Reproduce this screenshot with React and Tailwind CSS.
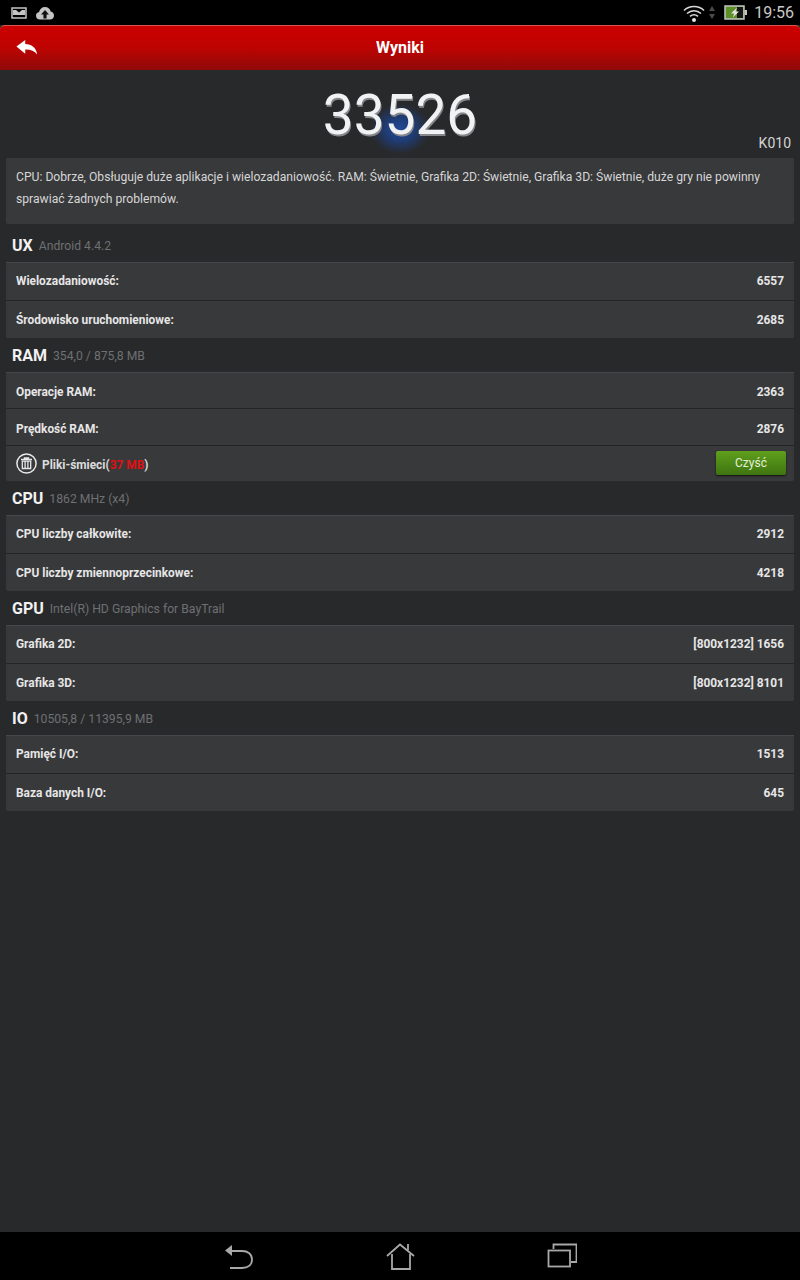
import React from 'react';

const sections = [
  {
    title: 'UX',
    sub: 'Android 4.4.2',
    head: 'h-[38px] pt-[6px]',
    rows: [
      { label: 'Wielozadaniowość:', value: '6557', tweak: 'h-[38px]' },
      { label: 'Środowisko uruchomieniowe:', value: '2685', tweak: 'h-[38px] pt-[2px]' },
    ],
  },
  {
    title: 'RAM',
    sub: '354,0 / 875,8 MB',
    rows: [
      { label: 'Operacje RAM:', value: '2363', tweak: 'h-[36px] pt-[4px]' },
      { label: 'Prędkość RAM:', value: '2876', tweak: 'h-[37px] pt-[5px]' },
    ],
    junk: true,
  },
  {
    title: 'CPU',
    sub: '1862 MHz (x4)',
    rows: [
      { label: 'CPU liczby całkowite:', value: '2912', tweak: 'h-[38px]' },
      { label: 'CPU liczby zmiennoprzecinkowe:', value: '4218', tweak: 'h-[38px] pt-[2px]' },
    ],
  },
  {
    title: 'GPU',
    sub: 'Intel(R) HD Graphics for BayTrail',
    rows: [
      { label: 'Grafika 2D:', value: '[800x1232] 1656', tweak: 'h-[38px]' },
      { label: 'Grafika 3D:', value: '[800x1232] 8101', tweak: 'h-[38px] pt-[2px]' },
    ],
  },
  {
    title: 'IO',
    sub: '10505,8 / 11395,9 MB',
    rows: [
      { label: 'Pamięć I/O:', value: '1513', tweak: 'h-[38px]' },
      { label: 'Baza danych I/O:', value: '645', tweak: 'h-[38px] pt-[2px]' },
    ],
  },
];

function StatusBar() {
  return (
    <div className="h-[25px] bg-black flex items-center justify-between pl-[11px] pr-[6px] shrink-0">
      <div className="flex items-center gap-[9px]">
        <svg width="16" height="12" viewBox="0 0 16 12">
          <rect x="1" y="1" width="14" height="10" fill="none" stroke="#c4c4c4" strokeWidth="1.5" />
          <path d="M2 8 L2 3 L5 3 L8 5.5 L11 3 L14 3 L14 8 Z" fill="#c4c4c4" />
        </svg>
        <svg width="18" height="14" viewBox="0 0 18 14">
          <path d="M4 13.5 C1.5 13.5 0 11.8 0 9.7 C0 7.8 1.3 6.4 3.1 6.1 C3.6 3 6 1 9 1 C11.8 1 14 2.8 14.7 5.4 C16.6 5.6 18 7.3 18 9.4 C18 11.8 16.2 13.5 14 13.5 Z" fill="#c4c4c4" />
          <path d="M9 4 L13 8.4 L10.6 8.4 L10.6 12.5 L7.4 12.5 L7.4 8.4 L5 8.4 Z" fill="#111" />
        </svg>
      </div>
      <div className="flex items-center">
        <svg width="22" height="18" viewBox="0 0 22 18">
          <path d="M1 6.5 C6.5 1.2 15.5 1.2 21 6.5" fill="none" stroke="#d8d8d8" strokeWidth="1.6" />
          <path d="M4 9.5 C8 5.8 14 5.8 18 9.5" fill="none" stroke="#d8d8d8" strokeWidth="1.6" />
          <path d="M7 12.4 C9.4 10.4 12.6 10.4 15 12.4" fill="none" stroke="#d8d8d8" strokeWidth="1.6" />
          <circle cx="11" cy="16" r="2" fill="#e4e4e4" />
        </svg>
        <svg width="6" height="13" viewBox="0 0 6 13" className="ml-[4px]">
          <path d="M3 0 L6 5 L0 5 Z" fill="#4a4a4a" />
          <path d="M3 13 L6 8 L0 8 Z" fill="#4a4a4a" />
        </svg>
        <svg width="23" height="15" viewBox="0 0 23 15" className="ml-[9px]">
          <rect x="1" y="1" width="19" height="13" fill="#5d8f28" stroke="#c4c4c4" strokeWidth="1.5" />
          <rect x="13" y="2" width="6" height="11" fill="#161616" />
          <rect x="20.5" y="5" width="2.5" height="5" fill="#c4c4c4" />
          <path d="M13 2.5 L7 8.4 L10.4 8.4 L8.6 12.5 L15 6.6 L11.5 6.6 Z" fill="#e8e8e8" />
        </svg>
        <span className="ml-[7px] text-[16px] leading-none text-[#c9c9c9]">19:56</span>
      </div>
    </div>
  );
}

function TitleBar() {
  return (
    <div className="h-[45px] shrink-0 relative flex items-center justify-center rounded-t-[5px] border-t border-[#d9544f] bg-gradient-to-b from-[#cc0000] via-[#bd0301] to-[#8f0a08]">
      <svg width="22" height="15" viewBox="0 0 24 17" className="absolute left-[16px] top-[14px]">
        <path d="M0 7.5 L10 0 L10 4.6 C17 4.6 22.5 8.6 23.5 16.5 C20.5 12.6 16 10.6 10 10.8 L10 15.5 Z" fill="#ffffff" />
      </svg>
      <span className="text-[16px] font-bold text-white">Wyniki</span>
    </div>
  );
}

function Score() {
  return (
    <div className="h-[88px] shrink-0 relative flex justify-center">
      <div className="absolute left-[370px] top-[34px] w-[60px] h-[50px] bg-[radial-gradient(closest-side,#234a96_0%,#1f3d78_45%,transparent_100%)]" />
      <span className="relative mt-[13px] text-[55px] leading-[64px] text-[#f1f2f4] [text-shadow:1px_2px_0_#85878a]">
        33526
      </span>
      <span className="absolute right-[9px] bottom-[6px] text-[14px] leading-[18px] text-[#d4d4d4]">K010</span>
    </div>
  );
}

function Row({ label, value, tweak }) {
  return (
    <div className={`flex items-center justify-between px-[10px] text-[11.9px] font-bold text-[#e6e6e6] border-t border-[#222426] first:border-[#46474a] ${tweak}`}>
      <span>{label}</span>
      <span>{value}</span>
    </div>
  );
}

function JunkRow() {
  return (
    <div className="h-[36px] flex items-center justify-between pl-[10px] pr-[8px] border-t border-[#222426]">
      <div className="flex items-center gap-[5px] text-[11.9px] font-bold text-[#dcdcdc]">
        <svg width="21" height="21" viewBox="0 0 21 21">
          <circle cx="10.5" cy="10.5" r="9.6" fill="none" stroke="#e8e8e8" strokeWidth="1.5" />
          <path d="M5 6.5 H16 M8.5 6.5 V5 H12.5 V6.5" fill="none" stroke="#e8e8e8" strokeWidth="1.4" />
          <path d="M6.3 8.2 H14.7 V15.5 H6.3 Z M9.1 8.2 V15.5 M11.9 8.2 V15.5" fill="none" stroke="#e8e8e8" strokeWidth="1.3" />
        </svg>
        <span className="pt-[4px]">
          Pliki-śmieci(<span className="text-[#e01010]">37 MB</span>)
        </span>
      </div>
      <button className="w-[70px] h-[24px] mb-[2px] rounded-[2px] bg-gradient-to-b from-[#5fa01c] to-[#3e7410] text-[12px] text-[#e4efd8] shadow-[0_1px_2px_#111]">
        Czyść
      </button>
    </div>
  );
}

function Section({ section }) {
  return (
    <div className="shrink-0">
      <div className={`flex items-center pl-[6px] ${section.head || 'h-[34px] pt-[2px]'}`}>
        <span className="text-[16px] font-bold text-[#f2f2f2]">{section.title}</span>
        <span className="ml-[6px] text-[12.2px] text-[#6e7072]">{section.sub}</span>
      </div>
      <div className="rounded-[2px] bg-[#38393b]">
        {section.rows.map((row) => (
          <Row key={row.label} label={row.label} value={row.value} tweak={row.tweak} />
        ))}
        {section.junk && <JunkRow />}
      </div>
    </div>
  );
}

function NavBar() {
  return (
    <div className="h-[48px] shrink-0 bg-black flex items-center justify-center gap-[132px]">
      <svg width="30" height="28" viewBox="0 0 30 28">
        <path d="M8 9 H19 C25 9 29 12 29 17.5 C29 23 25 26 19 26 H7" fill="none" stroke="#a8a8a8" strokeWidth="1.8" />
        <path d="M2 8.5 L9 3 L9 14 Z" fill="#a8a8a8" />
      </svg>
      <svg width="30" height="28" viewBox="0 0 30 28">
        <path d="M2 14 L15 2.5 L29 14" fill="none" stroke="#a8a8a8" strokeWidth="1.8" />
        <path d="M7 12 V27 H25 V12 M23 2 V8" fill="none" stroke="#a8a8a8" strokeWidth="1.8" />
      </svg>
      <svg width="30" height="26" viewBox="0 0 30 26">
        <path d="M6.5 6 V1.5 H29.5 V19 H24" fill="none" stroke="#a8a8a8" strokeWidth="1.8" />
        <rect x="1.5" y="7.5" width="21.5" height="16" fill="none" stroke="#a8a8a8" strokeWidth="1.8" />
      </svg>
    </div>
  );
}

export default function App() {
  return (
    <div className="w-[800px] h-[1280px] flex flex-col overflow-hidden bg-[#28292b] [font-family:Roboto,'Noto_Sans',sans-serif]">
      <StatusBar />
      <TitleBar />
      <Score />
      <div className="flex-1 px-[6px]">
        <div className="h-[66px] rounded-[2px] bg-[#38393b] px-[10px] py-[8px] text-[12.15px] leading-[22px] text-[#d6d6d6]">
          CPU: Dobrze, Obsługuje duże aplikacje i wielozadaniowość. RAM: Świetnie, Grafika 2D: Świetnie, Grafika 3D: Świetnie, duże gry nie powinny sprawiać żadnych problemów.
        </div>
        {sections.map((s) => (
          <Section key={s.title} section={s} />
        ))}
      </div>
      <NavBar />
    </div>
  );
}
